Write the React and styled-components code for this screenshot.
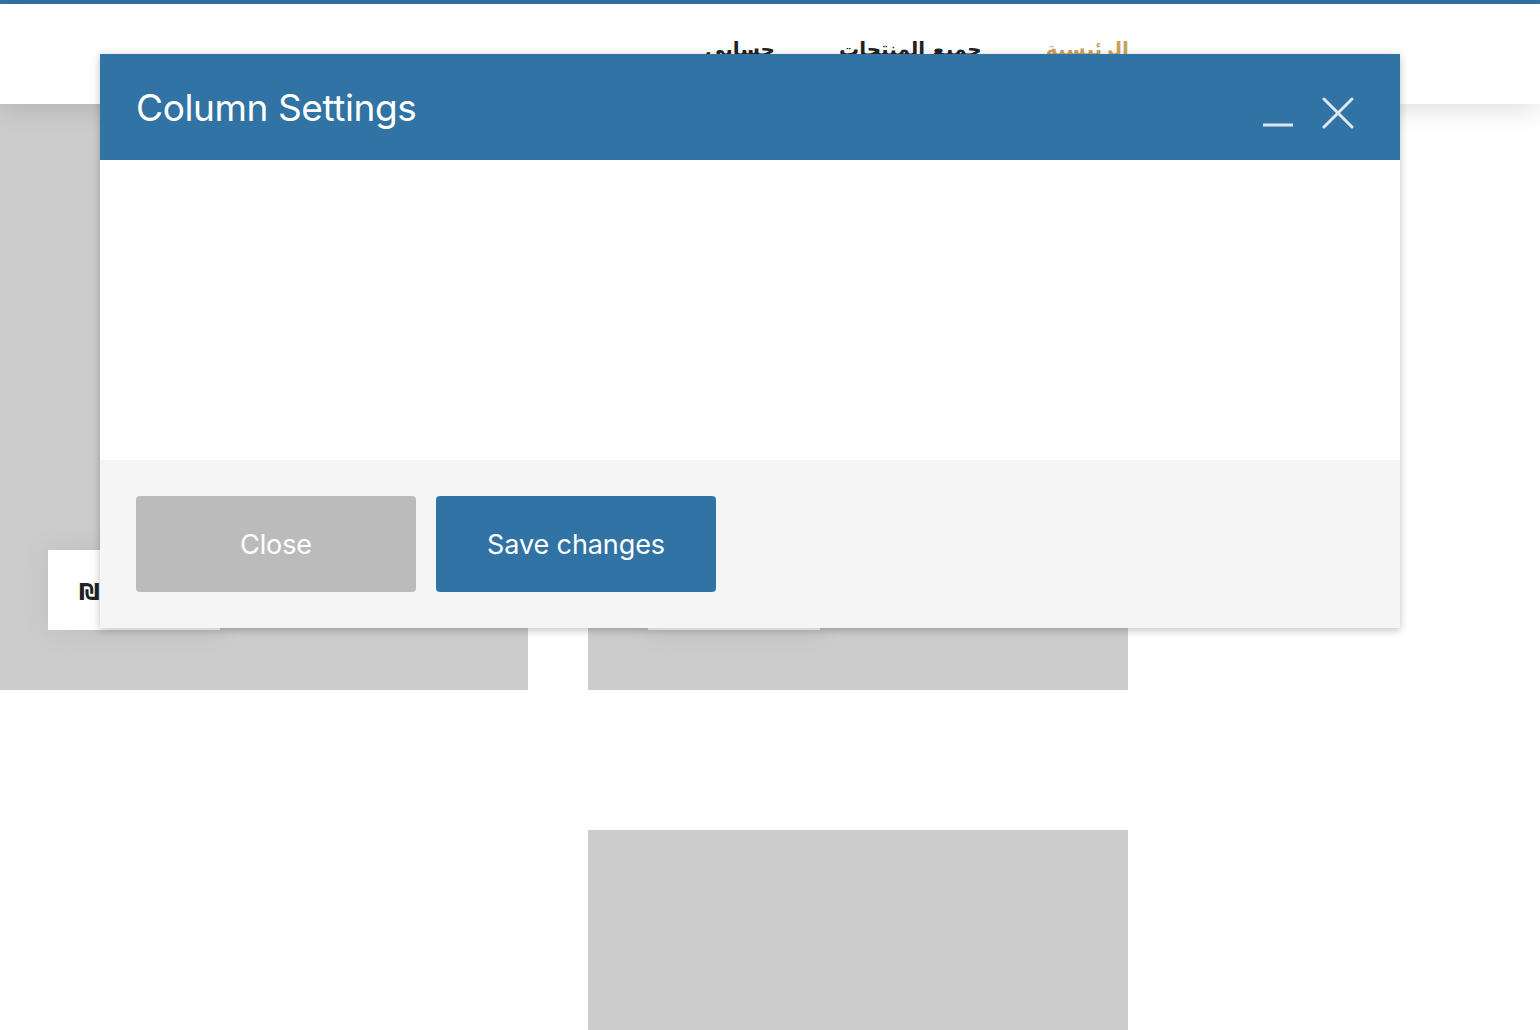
import React from "react";
import styled, { createGlobalStyle } from "styled-components";

const GlobalStyle = createGlobalStyle`
  html, body {
    margin: 0;
    padding: 0;
    background: #fff;
    font-family: Inter, "Liberation Sans", sans-serif;
    overflow: hidden;
  }
`

const Page = styled.div`
  width: 1540px;
  height: 1030px;
  position: relative;
  overflow: hidden;
`

const TopLine = styled.div`
  height: 4px;
  background-color: #3173a5;
`

const Header = styled.header`
  height: 100px;
  background: #fff;
  box-shadow: 0 6px 24px rgba(0, 0, 0, 0.12);
  position: relative;
  z-index: 2;
  display: flex;
  justify-content: flex-start;
  padding-left: 705px;
  box-sizing: border-box;
`

const Nav = styled.nav`
  direction: rtl;
  display: flex;
  gap: 64px;
  padding-top: 33px;
`

const NavItem = styled.a`
  font-family: "DejaVu Sans", sans-serif;
  font-size: 20px;
  font-weight: bold;
  color: ${props => props.active ? "#c9a35c" : "#222"};
  text-decoration: none;
`

const Grid = styled.div`
  display: grid;
  grid-template-columns: 528px 540px;
  column-gap: 60px;
  row-gap: 140px;
`

const Tile = styled.div`
  height: 586px;
  background-color: ${props => props.empty ? "transparent" : "#cccccc"};
  display: flex;
  align-items: flex-end;
  padding: 0 0 60px ${props => props.inset}px;
  box-sizing: border-box;
`

const PriceCard = styled.div`
  width: 172px;
  height: 80px;
  background: #fff;
  box-shadow: 0 0 30px rgba(0, 0, 0, 0.08);
  display: flex;
  align-items: center;
  padding-left: 31px;
  padding-top: 4px;
  box-sizing: border-box;
  font-family: "DejaVu Sans", sans-serif;
  font-weight: bold;
  font-size: 23px;
  color: #222;
`

const Modal = styled.div`
  position: absolute;
  left: 100px;
  top: 54px;
  width: 1300px;
  background: #fff;
  box-shadow: 0 2px 8px rgba(0, 0, 0, 0.25);
  z-index: 10;
`

const ModalHeader = styled.div`
  height: 106px;
  background-color: #3173a5;
  display: flex;
  align-items: center;
  justify-content: space-between;
  padding: 0 36px;
  box-sizing: border-box;
`

const ModalTitle = styled.h2`
  margin: 0;
  font-weight: 400;
  font-size: 37px;
  color: #fff;
  letter-spacing: -0.4px;
`

const HeaderTools = styled.div`
  display: flex;
  align-items: center;
  gap: 28px;
  padding-top: 12px;
  margin-right: 10px;
`

const ToolButton = styled.button`
  background: none;
  border: none;
  padding: 0;
  display: flex;
  cursor: pointer;
`

const ModalBody = styled.div`
  height: 300px;
`

const ModalFooter = styled.div`
  height: 168px;
  background-color: #f5f5f5;
  display: flex;
  align-items: center;
  gap: 20px;
  padding: 0 36px;
`

const FooterButton = styled.button`
  width: 280px;
  height: 96px;
  border: none;
  border-radius: 4px;
  background-color: ${props => props.primary ? "#3173a5" : "#bbbbbb"};
  color: #fff;
  font-family: Inter, "Liberation Sans", sans-serif;
  font-size: 27px;
  letter-spacing: -0.1px;
  cursor: pointer;
`

const App = () => {
  return (
    <Page>
      <GlobalStyle />
      <TopLine />
      <Header>
        <Nav>
          <NavItem active>الرئيسية</NavItem>
          <NavItem>جميع المنتجات</NavItem>
          <NavItem>حسابي</NavItem>
        </Nav>
      </Header>
      <Grid>
        <Tile inset={48}>
          <PriceCard>₪</PriceCard>
        </Tile>
        <Tile inset={60}>
          <PriceCard>₪</PriceCard>
        </Tile>
        <Tile empty />
        <Tile />
      </Grid>
      <Modal>
        <ModalHeader>
          <ModalTitle>Column Settings</ModalTitle>
          <HeaderTools>
            <ToolButton>
              <svg width="32" height="32" viewBox="0 0 32 32">
                <path d="M1 28h30" stroke="#dfe8f0" strokeWidth="3" />
              </svg>
            </ToolButton>
            <ToolButton>
              <svg width="32" height="32" viewBox="0 0 32 32">
                <path d="M2 2L30 30M30 2L2 30" stroke="#dfe8f0" strokeWidth="3" strokeLinecap="round" />
              </svg>
            </ToolButton>
          </HeaderTools>
        </ModalHeader>
        <ModalBody />
        <ModalFooter>
          <FooterButton>Close</FooterButton>
          <FooterButton primary>Save changes</FooterButton>
        </ModalFooter>
      </Modal>
    </Page>
  );
};

export default App;
